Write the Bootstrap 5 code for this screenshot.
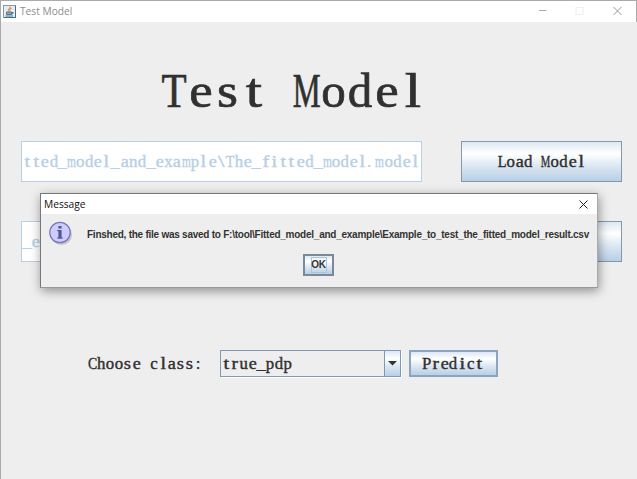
<!DOCTYPE html>
<html lang="en">
<head>
<meta charset="utf-8">
<title>Test Model</title>
<link href="https://cdn.jsdelivr.net/npm/bootstrap@5.3.0/dist/css/bootstrap.min.css" rel="stylesheet">
<style>
body{width:637px;height:479px;background:#eee;overflow:hidden;color:#333}
.app-window{width:637px;height:479px;border-top:1px solid #aaa;border-left:1px solid #aaa}
.titlebar{height:20.5px;padding-left:2px;font:10.2px/20px "Open Sans","Noto Sans",sans-serif;color:#8d8d8d;border-right:1px solid #aaa}
.titlebar svg,.msg-window svg{display:block;flex:none}
/* fixed-pitch serif: one cell per character */
.cells{display:inline-flex;white-space:pre;font-family:"Liberation Serif",serif;font-size:16.8px;line-height:1;color:#303030;-webkit-text-stroke:.4px currentColor;padding-top:3px}
.cells i{font-style:normal;display:flex;justify-content:center;width:8.82px;flex:none}
.cells b{font-weight:inherit;display:block;flex:none}
.cells.heading{font-size:49px;-webkit-text-stroke:.7px #303030;padding-top:1px}
.cells.heading i{width:26.55px}
.cells.pale{color:#b8cfe5}
.main-area{padding:0 15px 0 20px}
.heading-row{height:119px;padding:43px 0 0 140px}
.path-field{width:401px;height:41px;background:#fff;border:1px solid #b8cfe5;padding-left:1px;overflow:hidden}
.metal{background:linear-gradient(#dde8f3 0%,#fff 30%,#dde8f3 60%,#b8cfe5 100%);border:1px solid #7a8a99;border-radius:0;padding:0}
.wide-btn{width:161px;height:41px;border-color:#8499ae}
.choose-row{height:27px;margin-top:88px;padding-left:67px}
.combo{width:181px;height:27px;margin-left:17px;border:1px solid #7f99b5;box-shadow:1px 1px 0 #fff}
.combo .cells{padding-left:1px}
.combo-arrow{width:16px;height:25px;border-width:0 0 0 1px;border-color:#7f99b5}
.predict-btn{width:89px;height:27px;margin-left:8px;border:2px solid #8ba5c0}
.msg-window{left:40px;top:193px;width:558px;height:95px;background:#eee;border:1px solid #777;border-right-color:#aaa;border-bottom-color:#999;box-shadow:1px 3px 10px rgba(0,0,0,.4)}
.msg-title{height:20px;padding:0 9px 0 3px;font:10.2px/20px "Open Sans","Noto Sans",sans-serif;color:#111}
.msg-body{padding:7px 0 0 7px}
.msg-text{font:bold 10px/14px "Liberation Sans",sans-serif;letter-spacing:-.248px;margin:2px 0 0 13px;white-space:nowrap;color:#333}
.ok-btn{width:31px;height:22px;border:2px solid #7a8a99;margin:8px 0 0 262px}
.ok-label{font:bold 10px/14px "Liberation Sans",sans-serif;letter-spacing:-.3px;border:1px solid #b0c5da;width:16px;height:16px;color:#333}
</style>
<script src="https://cdn.jsdelivr.net/npm/bootstrap@5.3.0/dist/js/bootstrap.bundle.min.js"></script>
</head>
<body>
<div class="app-window">
  <div class="titlebar bg-white d-flex align-items-center">
    <svg width="13" height="13" viewBox="0 0 13 13"><rect x=".5" y=".5" width="12" height="12" fill="#e4edf3" stroke="#809bb0"/><path d="M1 12.5h11.5V1" fill="none" stroke="#456b87"/><path d="M7 1.5C8 3 4 4 5.5 6.5M8.7 3C6.5 4 6.5 5 7 6.5" fill="none" stroke="#ee9b50" stroke-width="1.3"/><path d="M3.5 7h5v2.5h-5zM8.5 7.5h1.7q.2 1.5-1.7 1.5M2.5 11h7.5" fill="#8fa9bd" stroke="#54758e"/></svg>
    <span style="margin-left:4px">Test Model</span>
    <svg class="ms-auto" width="97" height="20" viewBox="0 0 97 20" fill="none"><path d="M-.5 9.5h8" stroke="#aaa"/><rect x="37" y="6.5" width="7" height="7" stroke="#eee"/><path d="M74.5 6l8 8m0-8l-8 8" stroke="#999"/></svg>
  </div>
  <div class="main-area">
    <div class="heading-row"><span class="cells heading">Test Model</span></div>
    <div class="d-flex justify-content-between">
      <div class="path-field d-flex align-items-center"><span class="cells pale">tted_model_and_example\The_fitted_model.model</span></div>
      <button class="btn metal wide-btn d-flex align-items-center justify-content-center"><span class="cells">Load Model</span></button>
    </div>
    <div class="d-flex justify-content-between" style="margin-top:39px">
      <div class="path-field d-flex align-items-center"><span class="cells pale">_e</span></div>
      <button class="btn metal wide-btn"></button>
    </div>
    <div class="choose-row d-flex align-items-center">
      <span class="cells">Choose class:</span>
      <div class="combo d-flex align-items-center justify-content-between"><span class="cells">true_pdp</span>
        <div class="metal combo-arrow d-flex align-items-center justify-content-center"><svg width="9" height="5"><path d="M0 0h9L4.5 4.5z" fill="#333"/></svg></div>
      </div>
      <button class="btn metal predict-btn d-flex align-items-center justify-content-center"><span class="cells">Predict</span></button>
    </div>
  </div>
</div>
<div class="msg-window position-absolute">
  <div class="msg-title bg-white d-flex justify-content-between align-items-center"><span>Message</span>
    <svg width="9" height="9"><path d="M.5.5l8 8m0-8l-8 8" stroke="#222"/></svg>
  </div>
  <div class="msg-body d-flex align-items-center">
    <svg width="26" height="25" viewBox="0 0 26 25"><circle cx="13.5" cy="13.5" r="10.5" fill="#777" opacity=".35"/><circle cx="12" cy="11.5" r="10.2" fill="#ccccff" stroke="#7777b5" stroke-width="1.2"/><path d="M10.4 5h3.2v2.5h-3.2zM10.4 9h3.2v8.6h-3.2z" fill="#55558c"/><path d="M9.2 9h2v1.2h-2zM9.2 16.4h5.6v1.2H9.2z" fill="#55558c"/></svg>
    <span class="msg-text">Finshed, the file was saved to F:\tool\Fitted_model_and_example\Example_to_test_the_fitted_model_result.csv</span>
  </div>
  <button class="btn metal ok-btn d-flex align-items-center justify-content-center"><span class="ok-label d-flex justify-content-center">OK</span></button>
</div>
<script>
// Lay each character in an equal cell; wide letters are condensed and narrow ones widened.
const stretch={M:.64,m:.68,T:.84,L:.86,C:.82,l:1.2,t:1.2,i:1.2,s:1.1,r:1.15,f:1.2,e:1.08,a:1.08,_:1.1,'\\':1.4};
document.querySelectorAll('.cells').forEach(el=>{
  const text=el.textContent;
  el.textContent='';
  for(const ch of text){
    const cell=document.createElement('i'),glyph=document.createElement('b');
    glyph.textContent=ch;
    if(stretch[ch])glyph.style.transform='scaleX('+stretch[ch]+')';
    if(ch==='.')glyph.style.transform='translateX(-2px)';
    cell.append(glyph);el.append(cell);
  }
});
</script>
</body>
</html>
